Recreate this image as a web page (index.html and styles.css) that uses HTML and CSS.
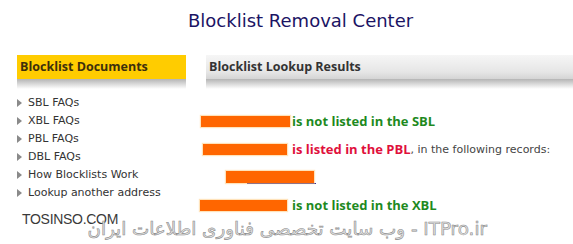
FILE: index.html
```html
<!DOCTYPE html>
<html>
<head>
<meta charset="utf-8">
<link rel="stylesheet" href="styles.css">
</head>
<body>
<div class="page">
  <h1 class="title">Blocklist Removal Center</h1>
  <div class="cols">
    <aside class="side">
      <div class="bar bar-yellow">Blocklist Documents</div>
      <ul class="links">
        <li>SBL FAQs</li>
        <li>XBL FAQs</li>
        <li>PBL FAQs</li>
        <li>DBL FAQs</li>
        <li>How Blocklists Work</li>
        <li>Lookup another address</li>
      </ul>
    </aside>
    <main class="main">
      <div class="bar bar-gray">Blocklist Lookup Results</div>
      <div class="results">
        <p class="row"><span class="redact r1"></span><span class="ok">is not listed in the SBL</span></p>
        <p class="row"><span class="redact r2"></span><span class="bad">is listed in the PBL</span><span class="plain">, in the following records:</span></p>
        <p class="row rec-row"><a class="rec"><span class="redact r3"></span></a></p>
        <p class="row"><span class="redact r4"></span><span class="ok">is not listed in the XBL</span></p>
      </div>
    </main>
  </div>
  <div class="wm-site">TOSINSO.COM</div>
  <div class="wm-fa" dir="rtl">ITPro.ir - وب سایت تخصصی فناوری اطلاعات ایران</div>
</div>
</body>
</html>
```
FILE: styles.css
```css
html, body {
  margin: 0;
  padding: 0;
  background: #ffffff;
}
.page {
  position: relative;
  width: 573px;
  height: 244px;
  overflow: hidden;
  font-family: "DejaVu Sans", Verdana, sans-serif;
}
.title {
  margin: 0;
  padding: 9px 0 0 188px;
  height: 55px;
  box-sizing: border-box;
  font-family: "DejaVu Sans", Verdana, sans-serif;
  font-weight: normal;
  font-size: 18px;
  line-height: 24px;
  color: #1b1464;
}
.cols {
  display: flex;
  gap: 14px;
  padding-left: 17px;
}
.side {
  width: 169px;
  flex: none;
}
.main {
  flex: 1;
}
.bar {
  position: relative;
  height: 24px;
  box-sizing: border-box;
  font-family: "Open Sans", sans-serif;
  font-weight: 700;
  font-size: 12.5px;
  line-height: 24px;
  padding-left: 3px;
}
.bar::after {
  content: "";
  position: absolute;
  left: 0;
  right: 0;
  top: 24px;
  height: 10px;
  background: linear-gradient(#b4b4b4, rgba(255,255,255,0));
}
.bar-yellow {
  background: #ffcc00;
  color: #3d2f0c;
}
.bar-gray {
  margin-left: 6px;
  background: linear-gradient(#f6f6f6, #e6e6e6 70%, #d4d4d4);
  color: #333333;
}
.links {
  list-style: none;
  margin: 15px 0 0 0;
  padding: 0;
}
.links li {
  position: relative;
  height: 18px;
  line-height: 18px;
  padding-left: 11px;
  font-size: 11px;
  color: #333333;
}
.links li::before {
  content: "";
  position: absolute;
  left: 0;
  top: 5px;
  border-left: 5px solid #8a8a8a;
  border-top: 4px solid transparent;
  border-bottom: 4px solid transparent;
}
.results {
  padding-top: 28px;
}
.row {
  margin: 0;
  height: 28px;
  display: flex;
  align-items: center;
  font-size: 11px;
}
.redact {
  display: inline-block;
  height: 11px;
  background: #ff6600;
  box-shadow: 0 0 1px 1px rgba(255, 200, 120, 0.5);
  margin-right: 2px;
}
.r1 { width: 89px; margin-left: 1px; }
.r2 { width: 84px; margin-left: 3px; margin-right: 5px; }
.r3 { width: 88px; height: 12px; display: block; }
.r4 { width: 87px; margin-right: 5px; }
.rec-row { padding-left: 26px; height: 28px; }
.rec {
  display: block;
  padding-bottom: 1px;
  background: linear-gradient(#1f1f9a, #1f1f9a) no-repeat right bottom / 69px 1px;
}
.ok, .bad {
  font-family: "Open Sans", sans-serif;
  font-weight: 700;
  font-size: 13px;
}
.ok { color: #1e8a1e; }
.bad { color: #e0103c; }
.plain {
  color: #444444;
  font-size: 11px;
}
.wm-site {
  position: absolute;
  left: 22px;
  top: 211px;
  font-family: "Liberation Sans", Arial, sans-serif;
  font-size: 14px;
  color: #3a3a3a;
  letter-spacing: -0.3px;
}
.wm-fa {
  position: absolute;
  right: 86px;
  top: 218px;
  font-family: "DejaVu Sans", sans-serif;
  font-size: 18.3px;
  color: #e4e4e4;
  -webkit-text-stroke: 0.6px #8c8c8c;
  white-space: nowrap;
}
```
